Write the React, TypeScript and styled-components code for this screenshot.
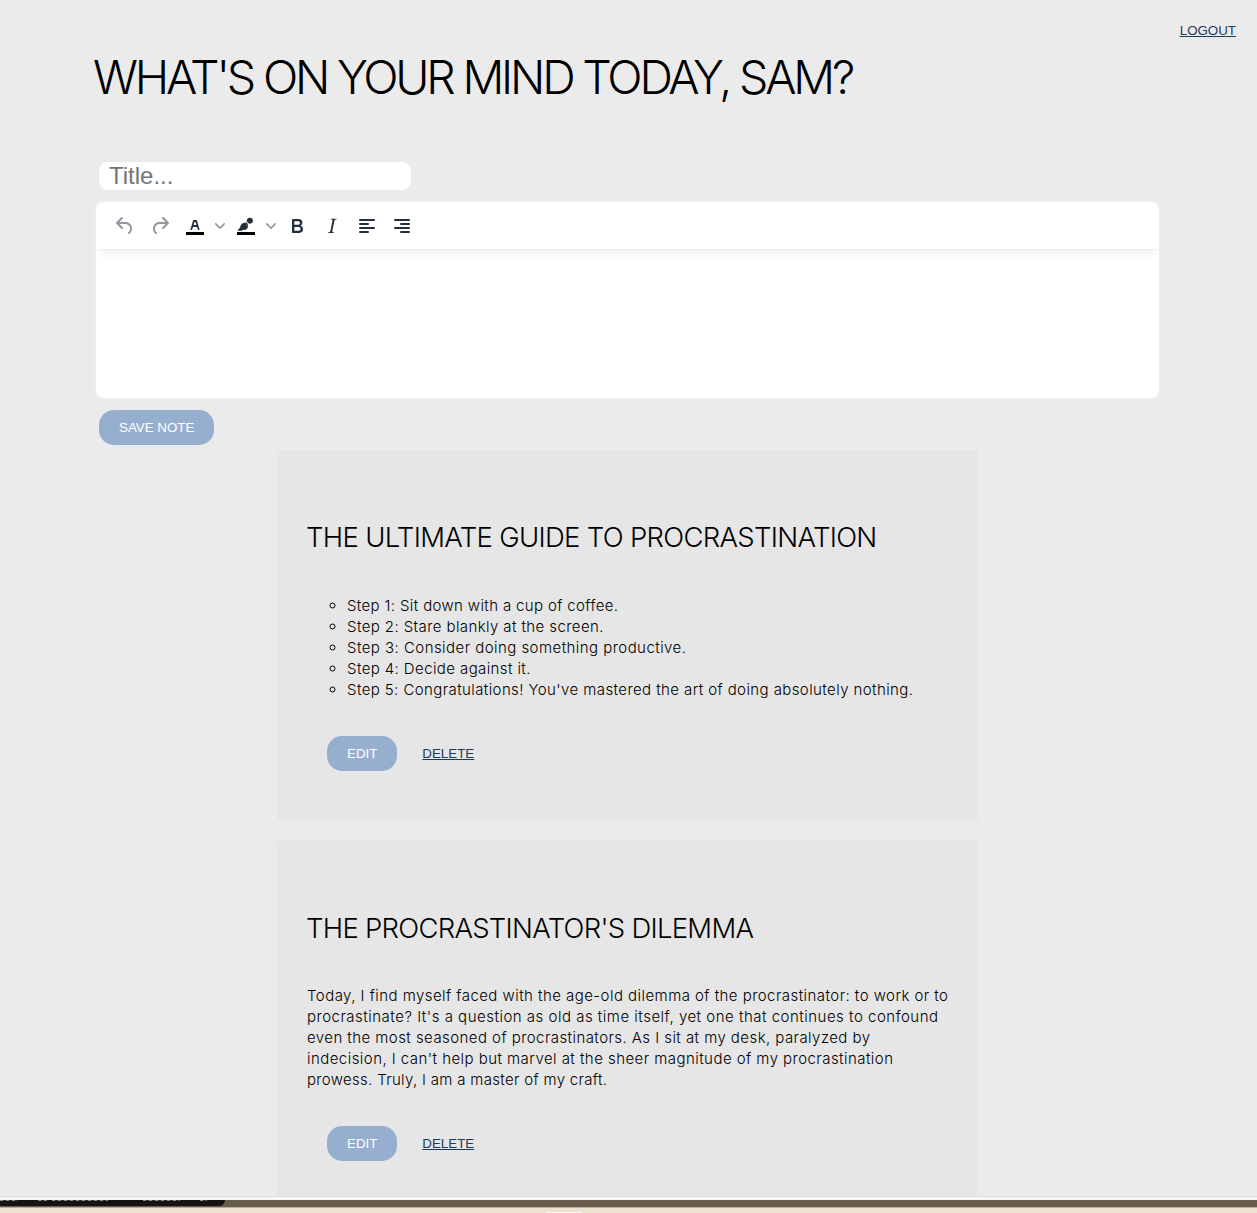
import React from 'react';
import styled, { createGlobalStyle } from 'styled-components';

const GlobalStyle = createGlobalStyle`
  *, *::before, *::after { box-sizing: border-box; }
  body { margin: 0; background: #ebebeb; color: #000; }
`;

const displayFont = `Inter, 'Open Sans', sans-serif`;
const controlFont = `'Liberation Sans', Arial, sans-serif`;

const Screen = styled.div`
  display: flex;
  flex-direction: column;
  height: 1213px;
  overflow: hidden;
`;

const Page = styled.main`
  flex: none;
  height: 1196px;
  overflow: hidden;
  background: #ebebeb;
  font-family: ${displayFont};
  font-weight: 300;
`;

const TopBar = styled.header`
  display: flex;
  justify-content: flex-end;
  height: 47px;
  padding: 23px 21px 0 0;
`;

const TextLink = styled.a`
  font: 400 13.333px/16px ${controlFont};
  color: #1d3a5f;
  text-decoration: underline;
  cursor: pointer;
`;

const Composer = styled.section`
  display: flex;
  flex-direction: column;
  align-items: flex-start;
  padding: 0 96px 0 94px;
`;

const Greeting = styled.h1`
  margin: 0 0 55px -1px;
  font-size: 46.5px;
  font-weight: 300;
  line-height: 60px;
  letter-spacing: -3.2px;
  white-space: nowrap;
`;

const TitleInput = styled.input`
  width: 312px;
  height: 28px;
  margin: 0 0 10px 5px;
  padding: 0 10px;
  border: 0;
  border-radius: 9px;
  outline: none;
  background: #fff;
  font: 400 24px/27px ${controlFont};
  &::placeholder { color: #757575; opacity: 1; }
`;

const Editor = styled.div`
  width: 1067px;
  height: 200px;
  border: 2px solid #eee;
  border-radius: 10px;
  background: #fff;
  overflow: hidden;
`;

const Toolbar = styled.div`
  display: flex;
  align-items: center;
  height: 47px;
  padding: 1px 0 0 12px;
  background: #fff;
  box-shadow: 0 2px 2px -2px rgba(34, 47, 62, 0.1), 0 8px 8px -4px rgba(34, 47, 62, 0.07);
`;

const ToolButton = styled.button<{ $muted?: boolean; $split?: boolean }>`
  display: flex;
  align-items: center;
  width: ${(p) => (p.$split ? 50 : 34)}px;
  height: 28px;
  margin-right: 1px;
  padding: 0 5px;
  border: 0;
  background: none;
  color: ${(p) => (p.$muted ? 'rgba(34, 47, 62, 0.5)' : '#222f3e')};
`;

const Icon = styled.svg`
  flex: none;
  width: 24px;
  height: 24px;
  fill: currentColor;
`;

const Chevron = styled.svg`
  flex: none;
  width: 10px;
  height: 10px;
  margin-left: 8px;
  fill: rgba(34, 47, 62, 0.5);
`;

const Pill = styled.button`
  height: 35px;
  padding: 0 20px;
  border: 0;
  border-radius: 15px;
  background: #96afcf;
  color: #fff;
  font: 400 13.333px/15px ${controlFont};
  white-space: nowrap;
`;

const SaveButton = styled(Pill)`
  margin: 10px 0 5px 5px;
`;

const Notes = styled.section`
  display: flex;
  flex-direction: column;
  gap: 20px;
  width: 701px;
  margin-left: 277px;
`;

const NoteCard = styled.article`
  height: 371px;
  padding: 69px 30px 0;
  background: #e6e6e6;
`;

const NoteTitle = styled.h2<{ $tracking: number; $gap: number }>`
  margin: 0 0 ${(p) => p.$gap}px -1px;
  font-size: 27.5px;
  font-weight: 300;
  line-height: 36px;
  letter-spacing: ${(p) => p.$tracking}px;
  white-space: nowrap;
`;

const StepList = styled.ul`
  margin: 0;
  padding: 0 0 0 40px;
  list-style: circle;
  font-size: 15px;
  line-height: 21px;
`;

const Step = styled.li<{ $tracking: number }>`
  letter-spacing: ${(p) => p.$tracking}px;
  white-space: nowrap;
`;

const Paragraph = styled.p`
  margin: 0;
  font-size: 15px;
  line-height: 21px;
`;

const Line = styled.span<{ $tracking: number }>`
  display: block;
  letter-spacing: ${(p) => p.$tracking}px;
  white-space: nowrap;
`;

const Actions = styled.div`
  display: flex;
  align-items: center;
  gap: 25px;
  margin: 36px 0 0 20px;
`;

const WindowEdge = styled.div`
  flex: none;
  height: 4px;
  border-top: 1px solid #d9d9d9;
  background: #f6f6f6;
`;

const Desk = styled.footer`
  flex: none;
  height: 8px;
  border-bottom: 1px solid #b9ac9a;
  background: #665c4a;
`;

const Tabs = styled.div`
  display: flex;
  width: 225px;
  height: 6px;
  overflow: hidden;
  border-radius: 0 0 6px 0;
  background: #141513;
`;

const Paper = styled.div`
  display: flex;
  justify-content: center;
  align-items: flex-end;
  height: 5px;
  padding-right: 130px;
  background: #ece2cf;
`;

const PaperTab = styled.div`
  width: 36px;
  height: 1px;
  background: #faf7f0;
`;

const TabMark = styled.i<{ $gap: number; $width: number }>`
  width: ${(p) => p.$width}px;
  height: 1px;
  margin-left: ${(p) => p.$gap}px;
  background: repeating-linear-gradient(90deg, #8b8c8b 0 3px, #30312f 3px 6px);
`;

const steps = [
  { text: 'Step 1: Sit down with a cup of coffee.', tracking: 0.361 },
  { text: 'Step 2: Stare blankly at the screen.', tracking: 0.406 },
  { text: 'Step 3: Consider doing something productive.', tracking: 0.451 },
  { text: 'Step 4: Decide against it.', tracking: 0.401 },
  { text: "Step 5: Congratulations! You've mastered the art of doing absolutely nothing.", tracking: 0.407 },
];

const dilemma = [
  { text: 'Today, I find myself faced with the age-old dilemma of the procrastinator: to work or to', tracking: 0.451 },
  { text: "procrastinate? It's a question as old as time itself, yet one that continues to confound", tracking: 0.5 },
  { text: 'even the most seasoned of procrastinators. As I sit at my desk, paralyzed by', tracking: 0.437 },
  { text: "indecision, I can't help but marvel at the sheer magnitude of my procrastination", tracking: 0.451 },
  { text: 'prowess. Truly, I am a master of my craft.', tracking: 0.314 },
];

const tools = [
  { label: 'Undo', muted: true, d: 'M6.4 8H12c3.7 0 6.2 2 6.8 5.1.6 2.7-.4 5.6-2.3 6.8a1 1 0 0 1-1-1.8c1.1-.6 1.8-2.7 1.4-4.6-.5-2.1-2.1-3.5-4.9-3.5H6.4l3.3 3.3a1 1 0 1 1-1.4 1.4l-5-5a1 1 0 0 1 0-1.4l5-5a1 1 0 0 1 1.4 1.4L6.4 8Z' },
  { label: 'Redo', muted: true, d: 'M17.6 10H12c-2.8 0-4.4 1.4-4.9 3.5-.4 2 .3 4 1.4 4.6a1 1 0 1 1-1 1.8c-2-1.2-2.9-4.1-2.3-6.8.6-3 3-5.1 6.8-5.1h5.6l-3.3-3.3a1 1 0 1 1 1.4-1.4l5 5a1 1 0 0 1 0 1.4l-5 5a1 1 0 0 1-1.4-1.4l3.3-3.3Z' },
  { label: 'Text color', split: true, d: 'M8.7 16h-.8a.5.5 0 0 1-.5-.6l2.7-9c.1-.3.3-.4.5-.4h2.8c.2 0 .4.1.5.4l2.7 9a.5.5 0 0 1-.5.6h-.8a.5.5 0 0 1-.4-.4l-.7-2.2c0-.3-.3-.4-.5-.4h-3.4c-.2 0-.4.1-.5.4l-.7 2.2c0 .3-.2.4-.4.4Zm2.6-7.6-.6 2a.5.5 0 0 0 .5.6h1.6a.5.5 0 0 0 .5-.6l-.6-2c0-.3-.3-.4-.5-.4h-.4c-.2 0-.4.1-.5.4Z' },
  { label: 'Highlight color', split: true, d: 'M16 3.7a3 3 0 1 1-1.1 5.8L12.8 7.4A3 3 0 0 1 16 3.7ZM12 8.1l2.4 2.4-.8.8-2.4-2.4ZM10.5 8.4l3.5 3.5c0 2.2-1.6 3.9-3.6 4.2l-1.3-.3-1 .9H3.3l2.8-3.1c0-2.4 1.8-4.7 4.4-5.2Z' },
  { label: 'Bold', d: 'M7.8 19c-.3 0-.5 0-.6-.2l-.2-.5V5.7c0-.2 0-.4.2-.5l.6-.2h5c1.5 0 2.7.3 3.5 1 .7.6 1.1 1.4 1.1 2.5a3 3 0 0 1-.6 1.9c-.4.6-1 1-1.6 1.2.4.1.9.3 1.3.6s.8.7 1 1.2c.4.4.5 1 .5 1.6 0 1.3-.4 2.3-1.3 3-.8.7-2.1 1-3.8 1H7.8Zm5-8.3c.6 0 1.2-.1 1.6-.5.4-.3.6-.7.6-1.3 0-1.1-.8-1.7-2.3-1.7H9.3v3.5h3.4Zm.5 6c.7 0 1.3-.1 1.7-.4.4-.4.6-.9.6-1.5s-.2-1-.7-1.4c-.4-.3-1-.4-2-.4H9.4v3.8h4Z' },
  { label: 'Italic', d: 'm16.7 4.7-.1.9h-.3c-.6 0-1 0-1.4.3-.3.3-.4.6-.5 1.1l-2.1 9.8v.6c0 .5.4.8 1.4.8h.2l-.2.8H8l.2-.8h.2c1.1 0 1.8-.5 2-1.5l2-9.8.1-.5c0-.6-.4-.8-1.4-.8h-.3l.2-.9h5.8Z' },
  { label: 'Align left', d: 'M5 5h14a1 1 0 0 1 0 2H5a1 1 0 1 1 0-2Zm0 4h8a1 1 0 0 1 0 2H5a1 1 0 1 1 0-2Zm0 8h8a1 1 0 0 1 0 2H5a1 1 0 0 1 0-2Zm0-4h14a1 1 0 0 1 0 2H5a1 1 0 0 1 0-2Z' },
  { label: 'Align right', d: 'M5 5h14a1 1 0 0 1 0 2H5a1 1 0 1 1 0-2Zm6 4h8a1 1 0 0 1 0 2h-8a1 1 0 0 1 0-2Zm0 8h8a1 1 0 0 1 0 2h-8a1 1 0 0 1 0-2Zm-6-4h14a1 1 0 0 1 0 2H5a1 1 0 0 1 0-2Z' },
];

function NoteActions() {
  return (
    <Actions>
      <Pill>EDIT</Pill>
      <TextLink>DELETE</TextLink>
    </Actions>
  );
}

export default function App() {
  return (
    <Screen>
      <GlobalStyle />
      <Page>
        <TopBar>
          <TextLink>LOGOUT</TextLink>
        </TopBar>
        <Composer>
          <Greeting>WHAT'S ON YOUR MIND TODAY, SAM?</Greeting>
          <TitleInput placeholder="Title..." />
          <Editor>
            <Toolbar>
              {tools.map((tool) => (
                <ToolButton key={tool.label} aria-label={tool.label} $muted={tool.muted} $split={tool.split}>
                  <Icon viewBox="0 0 24 24">
                    {tool.split && <rect x="3" y="18" width="18" height="3" fill="#000" />}
                    <path fillRule="evenodd" d={tool.d} />
                  </Icon>
                  {tool.split && (
                    <Chevron viewBox="0 0 10 10">
                      <path d="M8.7 2.2c.3-.3.8-.3 1 0 .4.4.4.9 0 1.2L5.7 7.8c-.3.3-.9.3-1.2 0L.2 3.4a.8.8 0 0 1 0-1.2c.3-.3.8-.3 1.1 0L5 6l3.7-3.8Z" />
                    </Chevron>
                  )}
                </ToolButton>
              ))}
            </Toolbar>
          </Editor>
          <SaveButton>SAVE NOTE</SaveButton>
        </Composer>
        <Notes>
          <NoteCard>
            <NoteTitle $tracking={-0.7} $gap={40}>THE ULTIMATE GUIDE TO PROCRASTINATION</NoteTitle>
            <StepList>
              {steps.map((step) => (
                <Step key={step.text} $tracking={step.tracking}>{step.text}</Step>
              ))}
            </StepList>
            <NoteActions />
          </NoteCard>
          <NoteCard>
            <NoteTitle $tracking={-0.73} $gap={39}>THE PROCRASTINATOR'S DILEMMA</NoteTitle>
            <Paragraph>
              {dilemma.map((line) => (
                <Line key={line.text} $tracking={line.tracking}>{line.text} </Line>
              ))}
            </Paragraph>
            <NoteActions />
          </NoteCard>
        </Notes>
      </Page>
      <WindowEdge />
      <Desk>
        <Tabs>
          <TabMark $gap={0} $width={18} />
          <TabMark $gap={20} $width={9} />
          <TabMark $gap={5} $width={56} />
          <TabMark $gap={35} $width={37} />
          <TabMark $gap={20} $width={7} />
        </Tabs>
      </Desk>
      <Paper>
        <PaperTab />
      </Paper>
    </Screen>
  );
}
